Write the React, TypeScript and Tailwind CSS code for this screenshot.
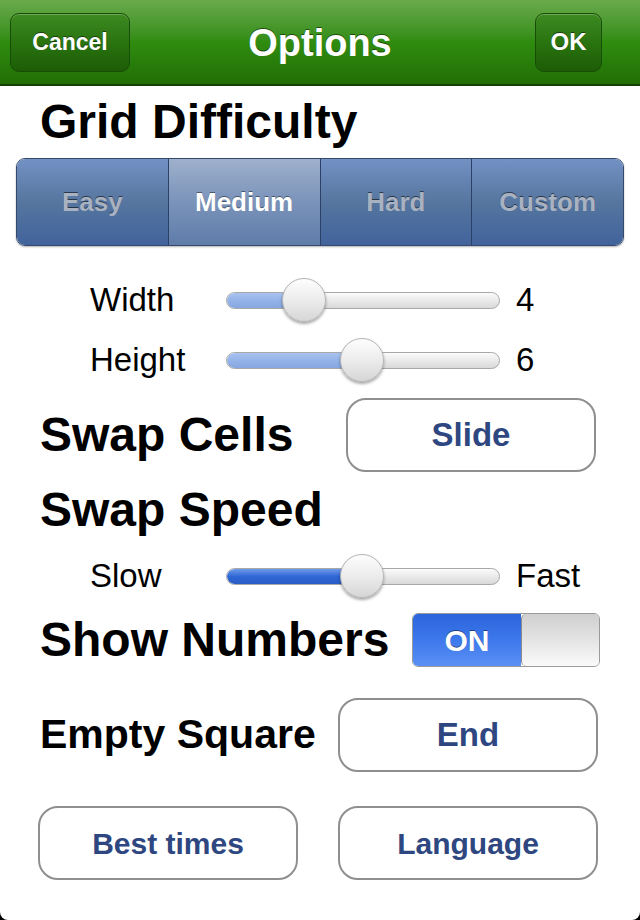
import React from "react";

const font = { fontFamily: '"Liberation Sans", Arial, Helvetica, sans-serif' };

function Slider({ pct, dark }: { pct: number; dark?: boolean }) {
  return (
    <div className="relative w-[274px] h-[44px] flex items-center">
      <div className="w-full h-[17px] rounded-full border border-[#a8a8a8] bg-gradient-to-b from-[#fbfbfb] to-[#d9d9d9] overflow-hidden">
        <div
          className={
            dark
              ? "h-full rounded-l-full bg-gradient-to-b from-[#6f9ae8] via-[#2f67d6] to-[#2a5cc4] border-r border-[#1f4aa0]"
              : "h-full rounded-l-full bg-gradient-to-b from-[#a9c3ef] via-[#94b3e8] to-[#86a7e0]"
          }
          style={{ width: `${pct}px` }}
        />
      </div>
      <div
        className="absolute top-0 w-[44px] h-[44px] rounded-full border border-[#b5b5b5] bg-gradient-to-b from-[#fdfdfd] via-[#ececec] to-[#d6d6d6] shadow-[0_2px_3px_rgba(0,0,0,0.35)]"
        style={{ left: `${pct - 22}px` }}
      />
    </div>
  );
}

function OutlineButton({ label, w, size }: { label: string; w: string; size: string }) {
  return (
    <div
      className={`${w} h-[74px] rounded-[20px] border-2 border-[#8f8f8f] bg-white flex items-center justify-center font-bold text-[#2e4780] ${size}`}
    >
      {label}
    </div>
  );
}

export default function App() {
  return (
    <div className="w-[640px] h-[920px] bg-black" style={font}>
      <div className="w-[640px] h-[920px] bg-white flex flex-col overflow-hidden rounded-b-[8px]">
        {/* Header */}
        <div className="h-[86px] shrink-0 relative flex items-center justify-between px-[10px] bg-gradient-to-b from-[#6aaa4c] via-[#2f8c0f] to-[#226f06] border-b-2 border-[#15400a]">
          <div className="w-[120px] h-[59px] rounded-[9px] border border-[#174d06] bg-gradient-to-b from-[#3d8a20] via-[#2a7410] to-[#1c5c06] shadow-[inset_0_1px_0_rgba(255,255,255,0.25)] flex items-center justify-center text-white font-bold text-[23px] [text-shadow:0_-1px_0_rgba(0,0,0,0.5)]">
            Cancel
          </div>
          <div className="absolute left-0 right-0 top-0 h-[86px] flex items-center justify-center pointer-events-none">
            <span className="text-white font-bold text-[38px] [text-shadow:0_-1px_0_rgba(0,0,0,0.5)]">Options</span>
          </div>
          <div className="w-[67px] h-[59px] mr-[28px] rounded-[9px] border border-[#174d06] bg-gradient-to-b from-[#3d8a20] via-[#2a7410] to-[#1c5c06] shadow-[inset_0_1px_0_rgba(255,255,255,0.25)] flex items-center justify-center text-white font-bold text-[24px] [text-shadow:0_-1px_0_rgba(0,0,0,0.5)]">
            OK
          </div>
        </div>

        {/* Grid Difficulty */}
        <div className="h-[72px] shrink-0 flex items-center pl-[40px]">
          <span className="font-bold text-[48px] text-black leading-none">Grid Difficulty</span>
        </div>

        {/* Segmented */}
        <div className="mx-[16px] h-[88px] shrink-0 rounded-[9px] border border-[#34496b] overflow-hidden flex shadow-[0_1px_2px_rgba(0,0,0,0.3)]">
          {[
            { t: "Easy", sel: false },
            { t: "Medium", sel: true },
            { t: "Hard", sel: false },
            { t: "Custom", sel: false },
          ].map((s, i) => (
            <div
              key={s.t}
              className={`flex-1 flex items-center justify-center font-bold text-[26px] ${
                i > 0 ? "border-l border-[#2b4268]" : ""
              } ${
                s.sel
                  ? "bg-gradient-to-b from-[#9eb0cc] via-[#7a93ba] to-[#5f7ca9] text-white [text-shadow:0_-1px_0_rgba(0,0,0,0.45)]"
                  : "bg-gradient-to-b from-[#7391c4] via-[#56769f] to-[#41639b] text-[#a9b2c1] [text-shadow:0_-1px_0_rgba(0,0,0,0.55)]"
              }`}
            >
              {s.t}
            </div>
          ))}
        </div>

        {/* Width / Height */}
        <div className="mt-[24px] h-[60px] shrink-0 flex items-center pl-[90px]">
          <span className="w-[136px] text-[33px] text-black">Width</span>
          <Slider pct={78} />
          <span className="ml-[16px] text-[33px] text-black">4</span>
        </div>
        <div className="h-[60px] shrink-0 flex items-center pl-[90px]">
          <span className="w-[136px] text-[33px] text-black">Height</span>
          <Slider pct={136} />
          <span className="ml-[16px] text-[33px] text-black">6</span>
        </div>

        {/* Swap Cells */}
        <div className="h-[90px] shrink-0 flex items-center pl-[40px]">
          <span className="w-[306px] font-bold text-[48px] text-black">Swap Cells</span>
          <OutlineButton label="Slide" w="w-[250px]" size="text-[33px]" />
        </div>

        {/* Swap Speed */}
        <div className="h-[60px] shrink-0 flex items-center pl-[40px]">
          <span className="font-bold text-[48px] text-black">Swap Speed</span>
        </div>

        {/* Slow / Fast */}
        <div className="h-[72px] shrink-0 flex items-center pl-[90px]">
          <span className="w-[136px] text-[33px] text-black">Slow</span>
          <Slider pct={136} dark />
          <span className="ml-[16px] text-[33px] text-black">Fast</span>
        </div>

        {/* Show Numbers */}
        <div className="h-[56px] shrink-0 flex items-center pl-[40px]">
          <span className="w-[372px] font-bold text-[48px] text-black">Show Numbers</span>
          <div className="w-[188px] h-[54px] rounded-[6px] border border-[#9a9a9a] overflow-hidden flex">
            <div className="w-[108px] h-full bg-gradient-to-b from-[#2c64dc] via-[#3d78ec] to-[#5a90f4] flex items-center justify-center text-white font-bold text-[30px] [text-shadow:0_-1px_0_rgba(0,0,0,0.45)]">
              ON
            </div>
            <div className="flex-1 h-full border-l border-[#8a8a8a] rounded-l-[5px] bg-gradient-to-b from-[#cfcfcf] via-[#e4e4e4] to-[#fafafa]" />
          </div>
        </div>

        {/* Empty Square */}
        <div className="mt-[30px] h-[74px] shrink-0 flex items-center pl-[40px]">
          <span className="w-[298px] font-bold text-[41px] text-black">Empty Square</span>
          <OutlineButton label="End" w="w-[260px]" size="text-[33px]" />
        </div>

        {/* Bottom buttons */}
        <div className="mt-[34px] h-[74px] shrink-0 flex items-center pl-[38px] gap-[40px]">
          <OutlineButton label="Best times" w="w-[260px]" size="text-[30px]" />
          <OutlineButton label="Language" w="w-[260px]" size="text-[30px]" />
        </div>
      </div>
    </div>
  );
}
